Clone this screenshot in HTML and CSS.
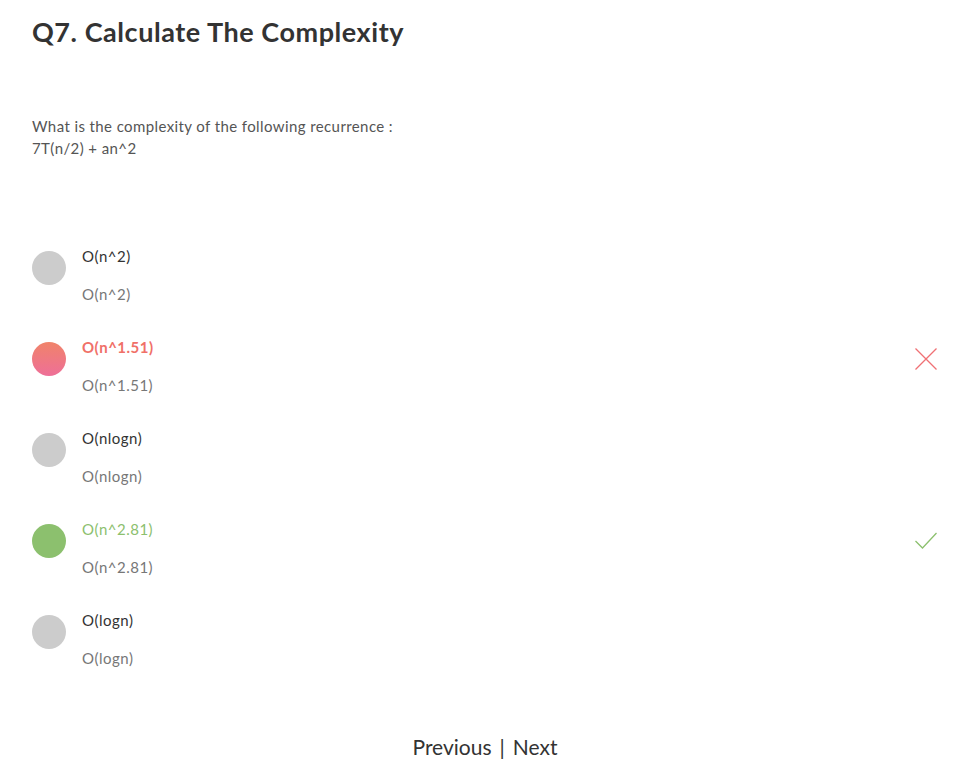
FILE: index.html
```html
<!DOCTYPE html>
<html>
<head>
<meta charset="utf-8">
<link rel="stylesheet" href="styles.css">
</head>
<body>
<div class="page">
  <h1 class="title">Q7. Calculate The Complexity</h1>
  <div class="question">
    <p>What is the complexity of the following recurrence :</p>
    <p>7T(n/2) + an^2</p>
  </div>
  <ul class="options">
    <li class="option">
      <span class="dot"></span>
      <div class="texts"><div class="label">O(n^2)</div><div class="sub">O(n^2)</div></div>
      <span class="mark"></span>
    </li>
    <li class="option wrong">
      <span class="dot"></span>
      <div class="texts"><div class="label">O(n^1.51)</div><div class="sub">O(n^1.51)</div></div>
      <span class="mark"><svg width="24" height="24" viewBox="0 0 24 24"><path d="M1.5 1.5 L22.5 22.5 M22.5 1.5 L1.5 22.5" stroke="#f07074" stroke-width="1.3" fill="none"/></svg></span>
    </li>
    <li class="option">
      <span class="dot"></span>
      <div class="texts"><div class="label">O(nlogn)</div><div class="sub">O(nlogn)</div></div>
      <span class="mark"></span>
    </li>
    <li class="option right">
      <span class="dot"></span>
      <div class="texts"><div class="label">O(n^2.81)</div><div class="sub">O(n^2.81)</div></div>
      <span class="mark"><svg width="24" height="24" viewBox="0 0 24 24"><path d="M1.5 12 L8.5 19 L22.5 4" stroke="#8cc06e" stroke-width="1.3" fill="none"/></svg></span>
    </li>
    <li class="option">
      <span class="dot"></span>
      <div class="texts"><div class="label">O(logn)</div><div class="sub">O(logn)</div></div>
      <span class="mark"></span>
    </li>
  </ul>
  <div class="nav"><a class="navlink">Previous</a><span class="sep">|</span><a class="navlink">Next</a></div>
</div>
</body>
</html>
```

FILE: styles.css
```css
* { box-sizing: border-box; }
html, body { margin: 0; padding: 0; background: #fff; }
body { font-family: "Lato", "Open Sans", sans-serif; color: #333; }
.page { padding: 14px 36px 0 32px; }
.title { margin: 0; font-size: 27px; font-weight: 700; color: #333; line-height: 36px; letter-spacing: 0.55px; }
.question { margin-top: 65px; font-size: 15px; color: #555; line-height: 22px; letter-spacing: 0.4px; }
.question p { margin: 0; }
.options { list-style: none; margin: 87px 0 0; padding: 0; }
.option { display: flex; align-items: flex-start; height: 91px; }
.dot { width: 34px; height: 34px; border-radius: 50%; background: #cccccc; margin-top: 5px; flex: none; }
.texts { margin-left: 16px; flex: 1; letter-spacing: 0.5px; }
.label { font-size: 15px; line-height: 20px; color: #333; }
.sub { font-size: 15px; line-height: 20px; color: #777; margin-top: 18px; }
.wrong .dot { background: linear-gradient(#f0836a, #ee6f98); }
.wrong .label { color: #f07068; font-weight: 700; }
.right .dot { background: #8cc06e; }
.right .label { color: #8cc06e; }
.mark { width: 24px; height: 24px; margin-top: 10px; flex: none; }
.nav { margin-top: 33px; text-align: center; font-size: 21px; color: #333; }
.navlink { color: #333; }
.sep { margin: 0 8px; }
```
